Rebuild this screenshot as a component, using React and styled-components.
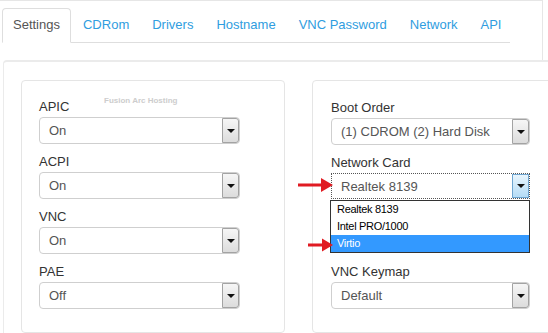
import React from "react";
import styled, { createGlobalStyle, css } from "styled-components";

const Global = createGlobalStyle`
  html, body {
    margin: 0;
    padding: 0;
    background: #fff;
    overflow: hidden;
  }
  body {
    width: 548px;
    height: 333px;
    font-family: "Liberation Sans", Arial, sans-serif;
  }
`;

const Page = styled.div`
  position: relative;
  width: 548px;
  height: 333px;
  overflow: hidden;
`;

const TopFrame = styled.div`
  width: 542px;
  height: 59px;
  border-top: 1px solid #e6e6e6;
  border-right: 1px solid #e6e6e6;
`;

const TabBar = styled.ul`
  display: flex;
  list-style: none;
  margin: 7px 0 0 2px;
  padding: 0;
  width: 508px;
  border-bottom: 1px solid #dedede;
`;

const Tab = styled.li`
  padding: 6px 10px 7px 10px;
  margin-right: 1px;
  margin-bottom: -1px;
  font-size: 13px;
  line-height: 20px;
  color: #2f9de0;
  border: 1px solid transparent;
  border-radius: 4px 4px 0 0;
  white-space: nowrap;
  ${(p) =>
    p.$active &&
    css`
      color: #555;
      background: #fff;
      border-color: #dedede;
      border-bottom-color: #fff;
    `}
`;

const Panel = styled.div`
  display: flex;
  gap: 27px;
  width: 700px;
  margin-left: 3px;
  padding: 18px 0 0 17px;
  border-top: 2px solid #ebebeb;
  border-left: 1px solid #ebebeb;
  border-top-left-radius: 4px;
`;

const Card = styled.div`
  position: relative;
  box-sizing: border-box;
  width: ${(p) => p.$w}px;
  height: 253px;
  padding: ${(p) => p.$top}px 0 0 ${(p) => p.$left}px;
  border: 1px solid #e5e5e5;
  border-radius: 4px;
`;

const Watermark = styled.span`
  position: absolute;
  left: 82px;
  top: 15px;
  font-size: 8px;
  font-weight: bold;
  color: #cdcdcd;
  white-space: nowrap;
`;

const Field = styled.div`
  margin-bottom: ${(p) => (p.$tight ? 0 : 9)}px;
`;

const Label = styled.label`
  display: block;
  margin-bottom: 1px;
  font-size: 13px;
  line-height: 18px;
  color: #333;
`;

const SelectBox = styled.div`
  display: flex;
  box-sizing: border-box;
  width: ${(p) => p.$w}px;
  height: 27px;
  background: #fff;
  border: 1px solid #cfcfcf;
  border-radius: 4px;
  ${(p) =>
    p.$focus &&
    css`
      height: 26px;
      border: 1px dotted #555;
      border-radius: 0;
    `}
`;

const Value = styled.span`
  flex: 1;
  padding-left: 9px;
  font-size: 13px;
  line-height: 25px;
  color: #555;
`;

const ArrowBtn = styled.span`
  display: flex;
  align-items: center;
  justify-content: center;
  box-sizing: border-box;
  width: 17px;
  border: 1px solid #a3a3a3;
  border-radius: 0 3px 3px 0;
  background: linear-gradient(#f6f6f6, #dcdcdc);
  ${(p) =>
    p.$hover &&
    css`
      border-color: #6fa6d1;
      border-radius: 0;
      background: linear-gradient(#e8f5fd, #b5dcf6);
    `}
  &::after {
    content: "";
    border-left: 4px solid transparent;
    border-right: 4px solid transparent;
    border-top: 4px solid #111;
  }
`;

const ListBox = styled.ul`
  box-sizing: border-box;
  width: 200px;
  margin: 1px 0 10px -1px;
  padding: 0;
  list-style: none;
  background: #fff;
  border: 1px solid #333;
`;

const Option = styled.li`
  height: 17px;
  padding-left: 6px;
  font-size: 11px;
  line-height: 17px;
  letter-spacing: -0.3px;
  color: #000;
  ${(p) =>
    p.$selected &&
    css`
      background: #3399ff;
      color: #fff;
    `}
`;

const Arrows = styled.svg`
  position: absolute;
  left: 0;
  top: 0;
  pointer-events: none;
`;

const Select = ({ value, w = 201, focus, hover }) => (
  <SelectBox $w={w} $focus={focus}>
    <Value>{value}</Value>
    <ArrowBtn $hover={hover} />
  </SelectBox>
);

const leftFields = [
  ["APIC", "On"],
  ["ACPI", "On"],
  ["VNC", "On"],
  ["PAE", "Off"],
];

const tabs = ["Settings", "CDRom", "Drivers", "Hostname", "VNC Password", "Network", "API"];

export default function App() {
  return (
    <Page>
      <Global />
      <TopFrame>
        <TabBar>
          {tabs.map((t, i) => (
            <Tab key={t} $active={i === 0}>
              {t}
            </Tab>
          ))}
        </TabBar>
      </TopFrame>

      <Panel>
        <Card $w={264} $top={17} $left={17}>
          <Watermark>Fusion Arc Hosting</Watermark>
          {leftFields.map(([label, value]) => (
            <Field key={label}>
              <Label>{label}</Label>
              <Select value={value} />
            </Field>
          ))}
        </Card>

        <Card $w={300} $top={18} $left={18}>
          <Field>
            <Label>Boot Order</Label>
            <Select value="(1) CDROM (2) Hard Disk" w={199} />
          </Field>
          <Field $tight>
            <Label>Network Card</Label>
            <Select value="Realtek 8139" w={199} focus hover />
          </Field>
          <ListBox>
            <Option>Realtek 8139</Option>
            <Option>Intel PRO/1000</Option>
            <Option $selected>Virtio</Option>
          </ListBox>
          <Field>
            <Label>VNC Keymap</Label>
            <Select value="Default" w={199} />
          </Field>
        </Card>
      </Panel>

      <Arrows width="548" height="333" viewBox="0 0 548 333">
        <g fill="#e01b22">
          <rect x="298" y="183.5" width="25" height="3" />
          <polygon points="321,178 333,185 321,192" />
          <rect x="308" y="243.5" width="16" height="3" />
          <polygon points="322,238.5 333,245 322,251.5" />
        </g>
      </Arrows>
    </Page>
  );
}
